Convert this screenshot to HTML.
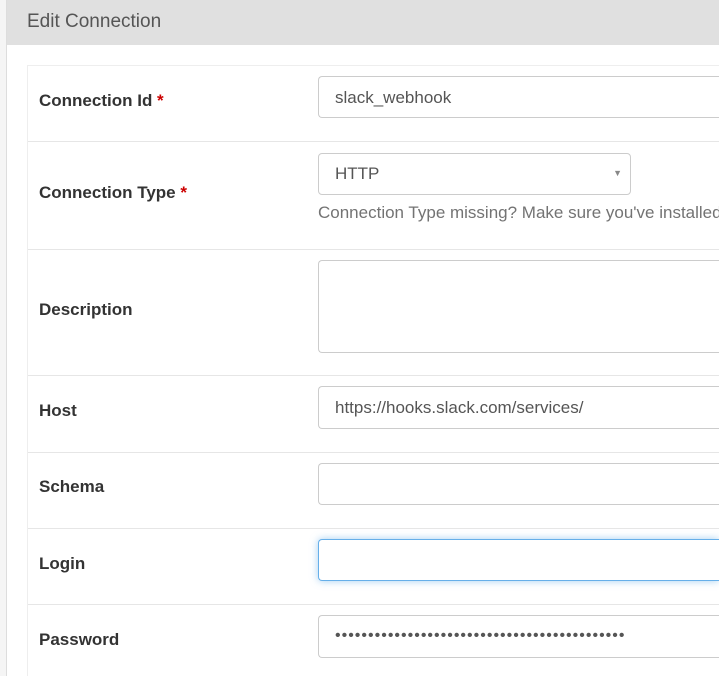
<!DOCTYPE html>
<html><head><style>
html,body{margin:0;width:719px;height:676px;overflow:hidden}
body{background:#fff;font-family:"Liberation Sans",sans-serif;position:relative}
.lstrip{position:absolute;left:0;top:0;width:6px;height:676px;background:#f5f5f5;border-right:1px solid #ddd}
.hdr{position:absolute;left:7px;top:0;width:712px;height:45px;background:#e0e0e0}
.hdr span{position:absolute;left:20px;top:11px;font-size:19px;color:#555}
.box{position:absolute;left:27px;top:65px;width:692px;height:611px;border-left:1px solid #eee;border-top:1px solid #eee}
.sep{position:absolute;left:28px;width:691px;height:1px;background:#e6e6e6}
.lbl{position:absolute;left:39px;font-size:17px;font-weight:bold;color:#333}
.lbl b{color:#c00;font-weight:bold}
.in{position:absolute;left:318px;width:401px;height:40px;border:1px solid #ccc;border-right:none;border-radius:4px 0 0 4px;background:#fff;box-sizing:border-box;font-size:17px;color:#555;padding:11px 0 0 16px;overflow:hidden;white-space:nowrap}
.help{position:absolute;left:318px;top:203px;width:401px;overflow:hidden;font-size:17px;color:#737373;white-space:nowrap}
</style></head><body>
<div class="lstrip"></div>
<div class="hdr"><span>Edit Connection</span></div>
<div class="box"></div>
<div class="sep" style="top:141px"></div>
<div class="sep" style="top:249px"></div>
<div class="sep" style="top:375px"></div>
<div class="sep" style="top:452px"></div>
<div class="sep" style="top:528px"></div>
<div class="sep" style="top:604px"></div>
<div class="lbl" style="top:91px">Connection Id <b>*</b></div>
<div class="in" style="top:76px;height:42px">slack_webhook</div>
<div class="lbl" style="top:183px">Connection Type <b>*</b></div>
<div class="in" style="top:153px;width:313px;height:42px;border-right:1px solid #ccc;border-radius:4px;padding-top:10px">HTTP<span style="position:absolute;right:8px;top:14px;font-size:9px;color:#888">▼</span></div>
<div class="help">Connection Type missing? Make sure you've installed the corresponding package.</div>
<div class="lbl" style="top:300px">Description</div>
<div class="in" style="top:260px;height:93px"></div>
<div class="lbl" style="top:401px">Host</div>
<div class="in" style="top:386px;height:43px">https://hooks.slack.com/services/</div>
<div class="lbl" style="top:477px">Schema</div>
<div class="in" style="top:463px;height:42px"></div>
<div class="lbl" style="top:554px">Login</div>
<div class="in" style="top:539px;height:42px;border-color:#66afe9;box-shadow:0 0 8px rgba(102,175,233,.6)"></div>
<div class="lbl" style="top:630px">Password</div>
<div class="in" style="top:615px;height:43px;font-size:16px;letter-spacing:1px;padding-top:11px">••••••••••••••••••••••••••••••••••••••••••••</div>
</body></html>
